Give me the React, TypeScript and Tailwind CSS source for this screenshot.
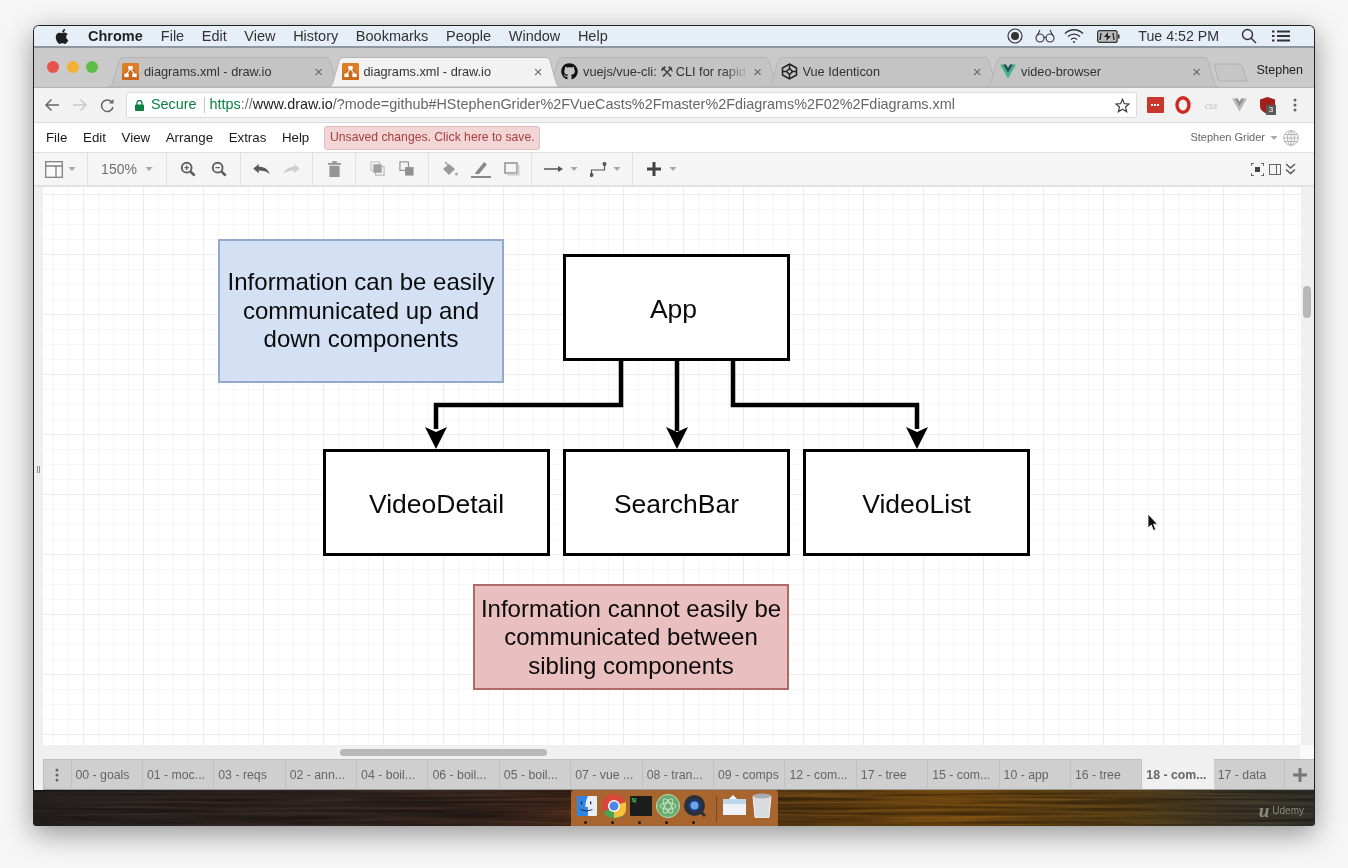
import React from "react";
import { FaApple, FaGithub } from "react-icons/fa";

const Caret = ({ c = "#a8a8a8" }: { c?: string }) => (
  <svg width="8" height="4" viewBox="0 0 9 5"><path d="M0 0h9L4.500 5z" fill={c} /></svg>
);

const DrawIcon = () => (
  <svg width="17" height="17" viewBox="0 0 17 17" className="shrink-0">
    <rect width="17" height="17" rx="1.500" fill="#dd7d24" />
    <path d="M0 12l5-5h7l5 5v5H0z" fill="#b9560f" opacity="0.55" />
    <path d="M8.500 6L4.500 11M8.500 6l4 5" stroke="#fff" strokeWidth="1.200" />
    <rect x="6.300" y="3" width="4.400" height="3.600" fill="#fff" />
    <rect x="2.300" y="10.500" width="4.400" height="3.600" fill="#fff" />
    <rect x="10.300" y="10.500" width="4.400" height="3.600" fill="#fff" />
  </svg>
);

const IdentIcon = () => (
  <svg width="17" height="17" viewBox="0 0 17 17" className="shrink-0" fill="none" stroke="#222" strokeWidth="1.500">
    <path d="M8.500 1L15.500 5v7l-7 4-7-4V5z" />
    <path d="M8.500 1v4.500M1.500 8.500h4M15.500 8.500h-4M8.500 16v-4.500" />
    <path d="M8.500 5.500l3 3-3 3-3-3z" />
  </svg>
);

const VueIcon = ({ a = "#41b883", b = "#35495e", s = 16 }: { a?: string; b?: string; s?: number }) => (
  <svg width={s} height={s} viewBox="0 0 16 15" className="shrink-0">
    <path d="M0 0h6l2 3.500L10 0h6L8 14z" fill={a} />
    <path d="M3.200 0H6l2 3.500L10 0h2.800L8 8.300z" fill={b} />
  </svg>
);

function Tab({ icon, label, active, children, fade }: { icon: React.ReactNode; label?: string; active?: boolean; children?: React.ReactNode; fade?: boolean }) {
  return (
    <div className={`relative w-[233px] h-[30px] shrink-0 -mr-[13.500px] ${active ? "z-10" : ""}`}>
      <svg className="absolute inset-0" width="233" height="30" viewBox="0 0 233 30">
        <path
          d="M0 30C3 30 4 28 5 25L11 4C12 1.500 13 .5 16 .5H217C220 .5 221 1.500 222 4L228 25C229 28 230 30 233 30Z"
          fill={active ? "#f2f2f2" : "#c4c4c4"}
          stroke="#b4b4b4"
          strokeWidth="1"
        />
      </svg>
      <div className="absolute inset-0 flex items-center pl-[14px] pr-[18px] pb-[1px]">
        {icon}
        <span className="ml-[5px] flex-1 flex items-center overflow-hidden whitespace-nowrap text-[12.750px] text-[#333] relative">
          {label}
          {children}
          {fade && <span className="absolute right-0 top-0 bottom-0 w-[26px] bg-gradient-to-r from-transparent to-[#c4c4c4]" />}
        </span>
        <span className="ml-[4px] text-[15px] leading-none text-[#666]">×</span>
      </div>
    </div>
  );
}

function Ext({ children, cls }: { children: React.ReactNode; cls: string }) {
  return <div className={`flex items-center justify-center ${cls}`}>{children}</div>;
}

const Group = ({ w, children, gap = "gap-[13px]", last }: { w: string; children: React.ReactNode; gap?: string; last?: boolean }) => (
  <div className={`${w} h-full flex items-center justify-center shrink-0 ${gap} ${last ? "" : "border-r border-[#e0e0e0]"}`}>{children}</div>
);

const bottomTabs = ["00 - goals", "01 - moc...", "03 - reqs", "02 - ann...", "04 - boil...", "06 - boil...", "05 - boil...", "07 - vue ...", "08 - tran...", "09 - comps", "12 - com...", "17 - tree", "15 - com...", "10 - app", "16 - tree", "18 - com...", "17 - data"];

function DiagramBox({ cls, children }: { cls: string; children: React.ReactNode }) {
  return <div className={`absolute flex items-center justify-center text-center text-[#0a0a0a] ${cls}`}>{children}</div>;
}

function Dock({ children }: { children: React.ReactNode }) {
  return <div className="w-[27px] h-[26px] flex items-center justify-center">{children}</div>;
}

export default function App() {
  return (
    <div className="w-[1348px] h-[868px] overflow-hidden bg-[#f6f6f6] pt-[25px] pl-[33px] font-['Liberation_Sans',Arial,sans-serif] blur-[0.4px]">
      <div className="w-[1282px] h-[801px] flex flex-col overflow-hidden rounded-t-[6px] rounded-b-[3px] border-x border-t border-[#222] shadow-[0_8px_28px_rgba(0,0,0,0.4)] bg-white">
        {/* Mac menu bar */}
        <div className="h-[22px] shrink-0 flex items-center bg-[#e6eef7] border-b-2 border-[#8f979f] text-[14.500px] text-[#222]">
          <FaApple className="ml-[20px] w-[16px] h-[17px] text-[#1f1f1f]" />
          <span className="ml-[18px] mt-[2px] font-bold text-[14.500px]">Chrome</span>
          <div className="ml-[18px] mt-[2px] flex gap-[17.600px] text-[#333]">
            <span>File</span><span>Edit</span><span>View</span><span>History</span><span>Bookmarks</span><span>People</span><span>Window</span><span>Help</span>
          </div>
          <div className="ml-auto flex items-center">
            <svg width="16" height="16" viewBox="0 0 16 16"><circle cx="8" cy="8" r="7" fill="none" stroke="#333" strokeWidth="1.200" /><circle cx="8" cy="8" r="4" fill="#333" /></svg>
            <svg className="ml-[12px]" width="20" height="14" viewBox="0 0 20 14" fill="none" stroke="#333" strokeWidth="1.100"><circle cx="5" cy="9" r="4" /><circle cx="15" cy="9" r="4" /><path d="M9 8.500c.7-.6 1.300-.6 2 0M2 7l3-6M18 7l-3-6" /></svg>
            <svg className="ml-[9px]" width="20" height="16" viewBox="0 0 20 16" fill="none" stroke="#333" strokeWidth="1.300"><path d="M1 5.500c5-5 13-5 18 0M4 8.500c3.500-3.300 8.500-3.300 12 0M7 11.500c1.800-1.600 4.200-1.600 6 0" /><circle cx="10" cy="14" r="1" fill="#333" stroke="none" /></svg>
            <svg className="ml-[13px]" width="23" height="13" viewBox="0 0 23 13"><rect x=".6" y=".6" width="19.500" height="11.800" rx="2" fill="#bbb" stroke="#333" strokeWidth="1.200" /><path d="M11 2L7 7h3l-1 4 5-5h-3z" fill="#222" /><path d="M4 3l-1 7M16 3l1 7" stroke="#333" strokeWidth="1.500" /><rect x="21" y="4.500" width="1.500" height="4" fill="#333" /></svg>
            <span className="ml-[18px] mt-[2px] text-[14.200px] text-[#333]">Tue 4:52 PM</span>
            <svg className="ml-[22px]" width="16" height="16" viewBox="0 0 16 16" fill="none" stroke="#333" strokeWidth="1.400"><circle cx="6.500" cy="6.500" r="5" /><path d="M10.200 10.200L15 15" /></svg>
            <svg className="ml-[15px] mr-[24px]" width="18" height="12" viewBox="0 0 18 12" stroke="#333" strokeWidth="1.800"><path d="M5 1.500h13M5 6h13M5 10.500h13M0 1.500h2.500M0 6h2.500M0 10.500h2.500" /></svg>
          </div>
        </div>

        {/* Tab strip */}
        <div className="h-[40px] shrink-0 relative flex items-end bg-[#cacaca] border-b border-[#b4b4b4]">
          <div className="flex items-center gap-[7.500px] ml-[13px] mb-[14px] w-[61px] shrink-0">
            <span className="w-[12px] h-[12px] rounded-full bg-[#e9524c]" />
            <span className="w-[12px] h-[12px] rounded-full bg-[#f2b134]" />
            <span className="w-[12px] h-[12px] rounded-full bg-[#5ebd47]" />
          </div>
          <div className="flex items-end">
            <Tab icon={<DrawIcon />} label="diagrams.xml - draw.io" />
            <Tab icon={<DrawIcon />} label="diagrams.xml - draw.io" active />
            <Tab icon={<FaGithub className="w-[17px] h-[17px] shrink-0 text-[#111]" />} label="vuejs/vue-cli:" fade>
              <span className="mx-[3px] text-[15px] leading-none text-[#444]">⚒</span>CLI for rapid
            </Tab>
            <Tab icon={<IdentIcon />} label="Vue Identicon" />
            <Tab icon={<VueIcon />} label="video-browser" />
            <div className="ml-[7px] mb-[5px] w-[36px] h-[19px]">
              <svg width="36" height="19" viewBox="0 0 36 19"><path d="M1 1h25q2 0 3 2l5 15H7q-1 0-2-2z" fill="#c6c6c6" stroke="#b0b0b0" /></svg>
            </div>
          </div>
          <span className="absolute right-[11px] top-[13px] text-[12.500px] text-[#222]">Stephen</span>
        </div>

        {/* Address bar */}
        <div className="h-[35px] shrink-0 flex items-center bg-[#f2f2f2] border-b border-[#dcdcdc]">
          <svg className="ml-[10px]" width="16" height="14" viewBox="0 0 16 14" fill="none" stroke="#666" strokeWidth="1.500"><path d="M15 7H2M7.500 1.500L2 7l5.500 5.500" /></svg>
          <svg className="ml-[12px]" width="16" height="14" viewBox="0 0 16 14" fill="none" stroke="#c8c8c8" strokeWidth="1.500"><path d="M1 7h13M8.500 1.500L14 7l-5.500 5.500" /></svg>
          <svg className="ml-[12px]" width="15" height="15" viewBox="0 0 15 15" fill="none" stroke="#666" strokeWidth="1.500"><path d="M13 9a5.800 5.800 0 1 1-.8-4.500" /><path d="M13.500 1v4.500H9" fill="#666" stroke="none" /></svg>
          <div className="ml-[11px] w-[1011px] h-[26px] bg-white border border-[#dcdcdc] rounded-[2px] flex items-center text-[14.400px] whitespace-nowrap">
            <svg className="ml-[8px]" width="9" height="11" viewBox="0 0 9 11"><rect x="0" y="4.500" width="9" height="6.500" rx="1" fill="#0b8043" /><path d="M2 5V3a2.500 2.500 0 0 1 5 0v2" fill="none" stroke="#0b8043" strokeWidth="1.300" /></svg>
            <span className="ml-[7px] text-[#0b8043]">Secure</span>
            <span className="ml-[7px] w-px h-[16px] bg-[#c8c8c8]" />
            <span className="ml-[5px]"><span className="text-[#0b8043]">https</span><span className="text-[#777]">://</span><span className="text-[#222]">www.draw.io</span><span className="text-[#666]">/?mode=github#HStephenGrider%2FVueCasts%2Fmaster%2Fdiagrams%2F02%2Fdiagrams.xml</span></span>
            <svg className="ml-auto mr-[6px]" width="15" height="15" viewBox="0 0 24 24" fill="none" stroke="#444" strokeWidth="2"><path d="M12 2l3 7 7.500.6-5.700 4.900 1.800 7.300L12 18l-6.600 3.800 1.800-7.300L1.500 9.600 9 9z" /></svg>
          </div>
          <Ext cls="ml-[9px] w-[18px]"><div className="w-[17px] h-[16px] bg-[#c9362b] rounded-[1px] flex items-center justify-center gap-[1px]"><i className="w-[2px] h-[2px] bg-white" /><i className="w-[2px] h-[2px] bg-white" /><i className="w-[2px] h-[2px] bg-white" /></div></Ext>
          <Ext cls="ml-[10px] w-[18px]"><svg width="16" height="18" viewBox="0 0 16 18"><ellipse cx="8" cy="9" rx="6" ry="7.300" fill="none" stroke="#cf2a1f" strokeWidth="3.400" /></svg></Ext>
          <Ext cls="ml-[10px] w-[18px]"><span className="text-[10px] italic text-[#bdbdbd] font-['Liberation_Serif',serif]">css</span></Ext>
          <Ext cls="ml-[10px] w-[18px]"><VueIcon a="#b9b9b9" b="#8f8f8f" s={15} /></Ext>
          <div className="relative ml-[10px] w-[18px] h-[20px] flex items-center justify-center">
            <svg width="15" height="17" viewBox="0 0 15 17"><path d="M7.500 0L15 2.500V9c0 4-3.500 6.500-7.500 8C3.500 15.500 0 13 0 9V2.500z" fill="#a1201a" /></svg>
            <span className="absolute right-0 bottom-0 w-[10px] h-[10px] bg-[#5a5a5a] text-white text-[8px] leading-[10px] text-center">3</span>
          </div>
          <svg className="ml-[17px]" width="4" height="14" viewBox="0 0 4 14" fill="#666"><circle cx="2" cy="2" r="1.500" /><circle cx="2" cy="7" r="1.500" /><circle cx="2" cy="12" r="1.500" /></svg>
        </div>

        {/* draw.io menu */}
        <div className="h-[30px] shrink-0 flex items-center bg-white border-b border-[#e0e0e0] text-[13.300px] text-[#1a1a1a]">
          <div className="ml-[12px] flex gap-[15.600px]"><span>File</span><span>Edit</span><span>View</span><span>Arrange</span><span>Extras</span><span>Help</span></div>
          <div className="ml-[15px] h-[24px] w-[216px] flex items-center justify-center rounded-[3px] bg-[#f2d5d5] border border-[#e4baba] text-[12.200px] text-[#a5403f]">Unsaved changes. Click here to save.</div>
          <div className="ml-auto flex items-center text-[11px] text-[#666]">
            <span>Stephen Grider</span>
            <span className="ml-[5px]"><Caret c="#aaa" /></span>
            <svg className="ml-[5px] mr-[15px]" width="16" height="16" viewBox="0 0 16 16" fill="none" stroke="#b5b5b5"><circle cx="8" cy="8" r="7.300" /><ellipse cx="8" cy="8" rx="3.500" ry="7.300" /><path d="M8 .7v14.600M.7 8h14.600M1.800 4.500h12.400M1.800 11.500h12.400" /></svg>
          </div>
        </div>

        {/* Toolbar */}
        <div className="h-[34px] shrink-0 flex items-center bg-[#f5f5f5] border-b-2 border-[#e2e2e2]">
          <Group w="w-[54px]" gap="gap-[5px]">
            <svg width="18" height="17" viewBox="0 0 18 17" fill="none" stroke="#808080" strokeWidth="1.300"><rect x=".7" y=".7" width="16.600" height="15.600" fill="#fafafa" /><path d="M.7 5h16.600M11 5v11.300" /></svg>
            <Caret />
          </Group>
          <Group w="w-[79px]" gap="gap-[8px]"><span className="text-[14px] text-[#707070]">150%</span><Caret /></Group>
          <Group w="w-[74px]">
            <svg width="16" height="16" viewBox="0 0 18 18" fill="none" stroke="#606060" strokeWidth="2.200"><circle cx="7.500" cy="7.500" r="5.500" /><path d="M11.500 11.500L16.500 16.500" strokeWidth="3" /><path d="M5 7.500h5M7.500 5v5" strokeWidth="1.500" /></svg>
            <svg className="ml-[2px]" width="16" height="16" viewBox="0 0 18 18" fill="none" stroke="#606060" strokeWidth="2.200"><circle cx="7.500" cy="7.500" r="5.500" /><path d="M11.500 11.500L16.500 16.500" strokeWidth="3" /><path d="M5 7.500h5" strokeWidth="1.500" /></svg>
          </Group>
          <Group w="w-[72px]">
            <svg width="17" height="11" viewBox="0 0 18 12"><path d="M0 5l6-5v3c6 0 10 2.500 12 8-3-3-7-4-12-4v3z" fill="#5a5a5a" /></svg>
            <svg width="17" height="11" viewBox="0 0 18 12"><path d="M18 5l-6-5v3C6 3 2 5.500 0 11c3-3 7-4 12-4v3z" fill="#cfcfcf" /></svg>
          </Group>
          <Group w="w-[43px]">
            <svg width="13" height="16" viewBox="0 0 14 17" fill="#969696"><rect x="0" y="2" width="14" height="2" /><rect x="4.500" y="0" width="5" height="2" /><path d="M1.500 5h11v12h-11z" /></svg>
          </Group>
          <Group w="w-[73px]">
            <svg width="16" height="16" viewBox="0 0 17 17"><rect x="1" y="1" width="9" height="9" fill="none" stroke="#bbb" /><rect x="6" y="6" width="9" height="9" fill="none" stroke="#aaa" /><rect x="3.500" y="3.500" width="9" height="9" fill="#a0a0a0" /></svg>
            <svg width="16" height="16" viewBox="0 0 17 17"><rect x="1" y="1" width="9" height="9" fill="#f5f5f5" stroke="#909090" strokeWidth="1.200" /><rect x="6.500" y="6.500" width="9" height="9" fill="#909090" /></svg>
          </Group>
          <Group w="w-[103px]">
            <svg width="17" height="17" viewBox="0 0 17 17"><path d="M2 8l6-5 6 5-6 6z" fill="#999" /><path d="M4 1l3 3" stroke="#999" strokeWidth="1.300" /><circle cx="15.500" cy="13" r="1.500" fill="#aaa" /></svg>
            <svg width="20" height="17" viewBox="0 0 20 17"><path d="M5 11L13 1l3 2.500L8 13H4z" fill="#888" /><rect x="0" y="15" width="20" height="2" fill="#888" /></svg>
            <svg width="16" height="14" viewBox="0 0 16 14"><rect x="1" y="1" width="12" height="10" fill="#f5f5f5" stroke="#909090" strokeWidth="1.500" /><path d="M14.500 3v9.500H3" fill="none" stroke="#ccc" strokeWidth="2" /></svg>
          </Group>
          <Group w="w-[101px]" gap="gap-[6px]">
            <svg width="20" height="8" viewBox="0 0 20 8"><path d="M0 4h15" stroke="#555" strokeWidth="1.300" /><path d="M14 1l5 3-5 3z" fill="#555" /></svg>
            <Caret />
            <svg className="ml-[6px]" width="17" height="15" viewBox="0 0 17 15" fill="none" stroke="#555" strokeWidth="1.200"><path d="M1.500 13V8h13V2" /><circle cx="1.500" cy="13" r="1.400" fill="#555" /><circle cx="14.500" cy="2" r="1.400" fill="#555" /></svg>
            <Caret />
          </Group>
          <Group w="w-[57px]" gap="gap-[8px]" last>
            <svg width="14" height="14" viewBox="0 0 14 14" fill="#444"><path d="M5.500 0h3v5.500H14v3H8.500V14h-3V8.500H0v-3h5.500z" /></svg>
            <Caret />
          </Group>
          <div className="ml-auto flex items-center gap-[4px] mr-[18px]">
            <svg width="13" height="13" viewBox="0 0 13 13" fill="none" stroke="#444" strokeWidth="1.500"><path d="M0 3V0h3M10 0h3v3M13 10v3h-3M3 13H0v-3" /><rect x="4" y="4" width="5" height="5" fill="#444" stroke="none" /></svg>
            <svg className="ml-[1px]" width="12" height="11" viewBox="0 0 12 11" fill="none" stroke="#666"><rect x=".5" y=".5" width="11" height="10" /><path d="M7.500 .5v10" /></svg>
            <svg width="11" height="12" viewBox="0 0 11 12" fill="none" stroke="#555" strokeWidth="1.400"><path d="M1 1l4.500 4L10 1M1 6.500l4.500 4 4.500-4" /></svg>
          </div>
        </div>

        {/* Canvas row */}
        <div className="h-[558px] shrink-0 flex">
          <div className="w-[9px] shrink-0 bg-[#efefef] flex items-center justify-center">
            <span className="text-[8px] text-[#555] leading-none mt-[6px]">||</span>
          </div>
          <div className="w-[1258px] shrink-0 relative bg-white bg-[linear-gradient(#ececec_1px,transparent_1px),linear-gradient(90deg,#ececec_1px,transparent_1px),linear-gradient(#f6f6f6_1px,transparent_1px),linear-gradient(90deg,#f6f6f6_1px,transparent_1px)] bg-size-[60px_60px,60px_60px,15px_15px,15px_15px] bg-position-[40px_7px,40px_7px,10px_7px,10px_7px]">
            <svg className="absolute left-0 top-0" width="1258" height="558" viewBox="0 0 1258 558" fill="none" stroke="#000" strokeWidth="4.500">
              <path d="M578 174v44H393v24" />
              <path d="M634 174v70" />
              <path d="M690 174v44h184v24" />
              <path d="M393 262l-11-22 11 5 11-5z" fill="#000" stroke="none" />
              <path d="M634 262l-11-22 11 5 11-5z" fill="#000" stroke="none" />
              <path d="M874 262l-11-22 11 5 11-5z" fill="#000" stroke="none" />
            </svg>
            <DiagramBox cls="left-[175px] top-[52px] w-[286px] h-[144px] bg-[#d4e1f5] border-2 border-[#92a9cc] text-[24px] leading-[28.500px]">
              <span>Information can be easily<br />communicated up and<br />down components</span>
            </DiagramBox>
            <DiagramBox cls="left-[520px] top-[67px] w-[227px] h-[107px] bg-white border-[3px] border-black text-[26.500px] pr-[6px] pt-[4px]">App</DiagramBox>
            <DiagramBox cls="left-[280px] top-[262px] w-[227px] h-[107px] bg-white border-[3px] border-black text-[26.500px] pt-[4px]">VideoDetail</DiagramBox>
            <DiagramBox cls="left-[520px] top-[262px] w-[227px] h-[107px] bg-white border-[3px] border-black text-[26.500px] pt-[4px]">SearchBar</DiagramBox>
            <DiagramBox cls="left-[760px] top-[262px] w-[227px] h-[107px] bg-white border-[3px] border-black text-[26.500px] pt-[4px]">VideoList</DiagramBox>
            <DiagramBox cls="left-[430px] top-[397px] w-[316px] h-[106px] bg-[#eabfbf] border-2 border-[#b06a6a] text-[24px] leading-[28.500px] pt-[1px]">
              <span>Information cannot easily be<br />communicated between<br />sibling components</span>
            </DiagramBox>
            <svg className="absolute left-[1104px] top-[327px]" width="12" height="18" viewBox="0 0 12 18"><path d="M1 0l0 14 3.200-3 2.300 5.500 2.300-1-2.300-5.300H10.500z" fill="#111" stroke="#fff" strokeWidth=".8" /></svg>
          </div>
          <div className="flex-1 bg-[#f0f0f0] relative">
            <div className="absolute left-[2px] top-[99px] w-[8px] h-[32px] rounded-full bg-[#b8b8b8]" />
          </div>
        </div>

        {/* Horizontal scrollbar */}
        <div className="h-[14px] shrink-0 flex items-center bg-[#f0f0f0]">
          <div className="ml-[306px] w-[207px] h-[7px] rounded-full bg-[#b8b8b8]" />
          <div className="ml-auto w-[14px] h-full bg-[#fafafa]" />
        </div>

        {/* Page tabs */}
        <div className="h-[31px] shrink-0 flex items-stretch bg-[#f0f0f0] pl-[9px] text-[12.300px] text-[#666] whitespace-nowrap">
          <div className="w-[28.500px] bg-[#cfcfcf] border border-[#c0c0c0] border-b-[#999] flex items-center justify-center">
            <svg width="4" height="14" viewBox="0 0 4 14" fill="#666"><circle cx="2" cy="2" r="1.500" /><circle cx="2" cy="7" r="1.500" /><circle cx="2" cy="12" r="1.500" /></svg>
          </div>
          {bottomTabs.map((t) => (
            <div key={t} className={`w-[71.400px] shrink-0 flex items-center pl-[4px] pt-[2px] border-r border-b border-t ${t.startsWith("18") ? "bg-[#f0f0f0] font-bold border-[#f0f0f0] border-b-[#999]" : "bg-[#cfcfcf] border-[#c0c0c0] border-b-[#999]"}`}>{t}</div>
          ))}
          <div className="flex-1 bg-[#cfcfcf] border-t border-b border-[#c0c0c0] border-b-[#999] flex items-center justify-center">
            <svg width="14" height="14" viewBox="0 0 14 14" fill="#777"><path d="M5.500 0h3v5.500H14v3H8.500V14h-3V8.500H0v-3h5.500z" /></svg>
          </div>
        </div>

        {/* Desktop strip with dock */}
        <div className="h-[36px] shrink-0 relative flex bg-[linear-gradient(90deg,#2e2826_0%,#3a2c27_20%,#402c24_34%,#55321f_42%,#744a16_58%,#855512_72%,#6e4d1a_85%,#4e442e_93%,#403e34_100%)]">
          <svg className="absolute inset-0 mix-blend-multiply" width="1282" height="36" aria-hidden="true">
            <filter id="wood"><feTurbulence type="fractalNoise" baseFrequency="0.006 0.35" numOctaves="3" seed="4" /><feColorMatrix values="0 0 0 0 0 0 0 0 0 0 0 0 0 0 0 0.800 0 0 0 -0.120" /></filter>
            <rect width="1282" height="36" filter="url(#wood)" />
          </svg>
          <div className="relative ml-[537px] w-[207px] h-full bg-[#a8652e] rounded-t-[3px] flex items-start pt-[3px] pl-[2px]">
            <Dock><svg width="20" height="22" viewBox="0 0 22 22"><rect width="22" height="22" rx="1" fill="#e9eef5" /><path d="M0 1q0-1 1-1h11q-3 6-3 12h3v10H1q-1 0-1-1z" fill="#2f85e6" /><path d="M5 6v3M15 6v3" stroke="#123" strokeWidth="1.400" /><path d="M4 15q6 3 13 0" stroke="#123" fill="none" /></svg></Dock>
            <Dock><svg width="24" height="24" viewBox="0 0 24 24"><circle cx="12" cy="12" r="12" fill="#d9473a" /><path d="M12 12L1.500 18A12 12 0 0 0 12 24z" fill="#4aa553" /><path d="M12 12l-4 12a12 12 0 0 0 15-6z" fill="#4aa553" /><path d="M12 12l11.500-4a12 12 0 0 1-3 14L12 24z" fill="#f2c23a" /><circle cx="12" cy="12" r="6" fill="#fff" /><circle cx="12" cy="12" r="4.500" fill="#4b86e6" /></svg></Dock>
            <Dock><div className="w-[22px] h-[20px] bg-[#1a1d1c] rounded-[1px] text-[6px] leading-[9px] pl-[2px] text-[#53c653] font-bold">$|</div></Dock>
            <Dock><svg width="24" height="24" viewBox="0 0 24 24" fill="none"><circle cx="12" cy="12" r="11.500" fill="#67ab6c" stroke="#bfe0bf" /><g stroke="#cfe9cf" strokeWidth=".9"><ellipse cx="12" cy="12" rx="8" ry="3.200" transform="rotate(60 12 12)" /><ellipse cx="12" cy="12" rx="8" ry="3.200" transform="rotate(-60 12 12)" /><ellipse cx="12" cy="12" rx="8" ry="3.200" /></g></svg></Dock>
            <Dock><svg width="24" height="24" viewBox="0 0 24 24" fill="none"><circle cx="11.500" cy="11.500" r="8.500" fill="#1b3b7c" stroke="#2a2f38" strokeWidth="4" /><circle cx="11.500" cy="11.500" r="4" fill="#6aa7e8" /><path d="M16 16l6 6" stroke="#2a2f38" strokeWidth="3" /></svg></Dock>
            <div className="ml-[8px] mt-[3px] w-px h-[26px] bg-[#7d4921]" />
            <div className="w-[23px] h-[24px] ml-[6px] mt-[2px]"><svg width="23" height="20" viewBox="0 0 23 20"><path d="M6 4l4-4 4 4z" fill="#fff" /><rect y="4" width="23" height="16" fill="#eef2f6" /><rect y="4" width="23" height="5" fill="#bcd6ea" /></svg></div>
            <div className="w-[20px] h-[24px] ml-[6px]"><svg width="20" height="25" viewBox="0 0 20 25"><path d="M1 3h18l-2 21q0 1-1 1H4q-1 0-1-1z" fill="#d9dcdf" stroke="#f2f2f2" /><ellipse cx="10" cy="3" rx="9" ry="2.500" fill="#a9adb2" /></svg></div>
            <div className="absolute left-[13px] bottom-[2px] flex gap-[24px]"><i className="w-[3px] h-[3px] rounded-full bg-[#2a1608]" /><i className="w-[3px] h-[3px] rounded-full bg-[#2a1608]" /><i className="w-[3px] h-[3px] rounded-full bg-[#2a1608]" /><i className="w-[3px] h-[3px] rounded-full bg-[#2a1608]" /><i className="w-[3px] h-[3px] rounded-full bg-[#2a1608]" /></div>
          </div>
          <div className="absolute right-[10px] top-[11px] flex items-center gap-[3px] text-[#8a8a80]">
            <span className="text-[19px] leading-none italic font-['Liberation_Serif',serif] font-bold">u</span>
            <span className="text-[10px]">Udemy</span>
          </div>
        </div>
      </div>
    </div>
  );
}
